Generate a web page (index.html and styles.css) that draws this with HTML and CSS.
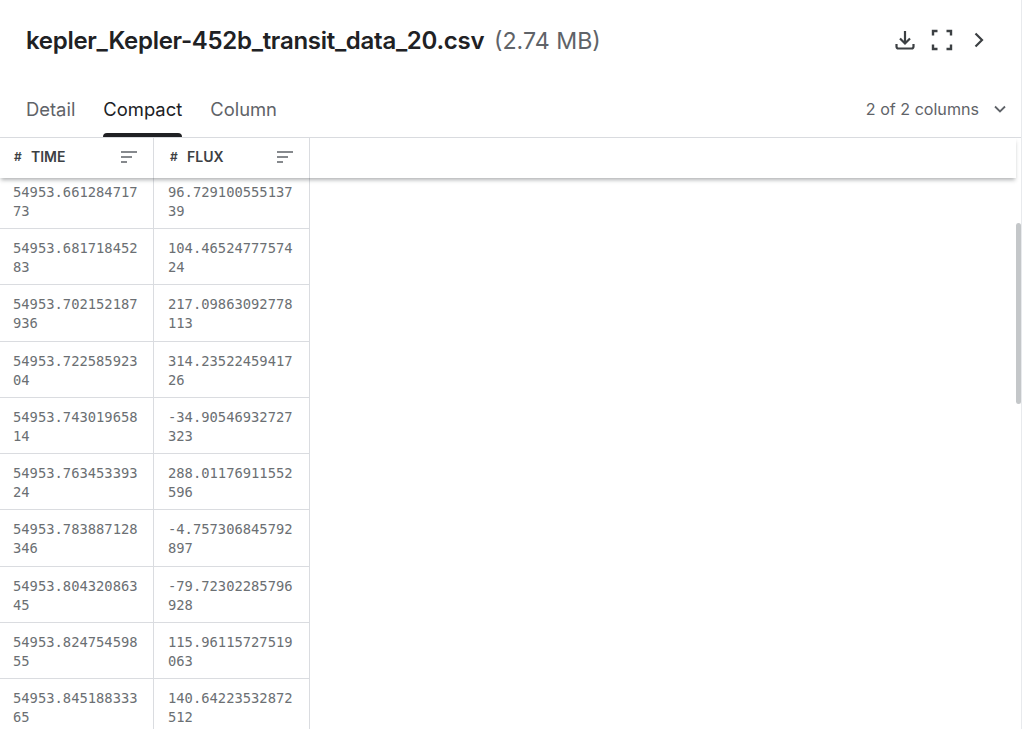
FILE: index.html
```html
<!DOCTYPE html>
<html lang="en">
<head>
    <meta charset="UTF-8">
    <meta name="viewport" content="width=device-width, initial-scale=1.0">
    <title>kepler_Kepler-452b_transit_data_20.csv</title>
    <link rel="stylesheet" href="styles.css">
</head>
<body>

    <div class="panel">
        <header class="file-header">
            <h1 class="file-title">kepler_Kepler-452b_transit_data_20.csv <span class="file-size">(2.74 MB)</span></h1>
            <div class="file-actions">
                <svg class="icon" width="24" height="24" viewBox="0 0 24 24" fill="none" stroke="#3c4043" stroke-width="2.2">
                    <path d="M12 3v12M7 10.5l5 5 5-5"/>
                    <path d="M3.5 16v2.5a2 2 0 0 0 2 2h13a2 2 0 0 0 2-2V16"/>
                </svg>
                <svg class="icon" width="24" height="24" viewBox="0 0 24 24" fill="none" stroke="#3c4043" stroke-width="2.4">
                    <path d="M3 7.5V3h4.5M16.5 3H21v4.5M3 16.5V21h4.5M21 16.5V21h-4.5"/>
                </svg>
                <svg class="icon" width="24" height="24" viewBox="0 0 24 24" fill="none" stroke="#3c4043" stroke-width="2.2">
                    <path d="M8.5 5.5l6.5 6.5-6.5 6.5"/>
                </svg>
            </div>
        </header>

        <nav class="tabs">
            <a class="tab">Detail</a>
            <a class="tab tab-active">Compact</a>
            <a class="tab">Column</a>
            <div class="column-picker">
                <span>2 of 2 columns</span>
                <svg width="16" height="16" viewBox="0 0 16 16" fill="none" stroke="#5f6368" stroke-width="1.8">
                    <path d="M3 5.5l5 5 5-5"/>
                </svg>
            </div>
        </nav>

        <div class="table-head">
            <div class="head-cell cell-time">
                <span class="head-hash">#</span><span class="head-name">TIME</span>
                <svg class="sort-icon" width="18" height="14" viewBox="0 0 18 14" fill="none" stroke="#5f6368" stroke-width="1.5">
                    <path d="M1 2h16M1 7h11M1 12h6"/>
                </svg>
            </div>
            <div class="head-cell cell-flux">
                <span class="head-hash">#</span><span class="head-name">FLUX</span>
                <svg class="sort-icon" width="18" height="14" viewBox="0 0 18 14" fill="none" stroke="#5f6368" stroke-width="1.5">
                    <path d="M1 2h16M1 7h11M1 12h6"/>
                </svg>
            </div>
        </div>

        <div class="table-body">
            <div class="row"><div class="cell cell-time">54953.66128471773</div><div class="cell cell-flux">96.72910055513739</div></div>
            <div class="row"><div class="cell cell-time">54953.68171845283</div><div class="cell cell-flux">104.4652477757424</div></div>
            <div class="row"><div class="cell cell-time">54953.702152187936</div><div class="cell cell-flux">217.09863092778113</div></div>
            <div class="row"><div class="cell cell-time">54953.72258592304</div><div class="cell cell-flux">314.2352245941726</div></div>
            <div class="row"><div class="cell cell-time">54953.74301965814</div><div class="cell cell-flux">-34.90546932727323</div></div>
            <div class="row"><div class="cell cell-time">54953.76345339324</div><div class="cell cell-flux">288.01176911552596</div></div>
            <div class="row"><div class="cell cell-time">54953.783887128346</div><div class="cell cell-flux">-4.757306845792897</div></div>
            <div class="row"><div class="cell cell-time">54953.80432086345</div><div class="cell cell-flux">-79.72302285796928</div></div>
            <div class="row"><div class="cell cell-time">54953.82475459855</div><div class="cell cell-flux">115.96115727519063</div></div>
            <div class="row"><div class="cell cell-time">54953.84518833365</div><div class="cell cell-flux">140.64223532872512</div></div>
            <div class="row"><div class="cell cell-time"></div><div class="cell cell-flux"></div></div>
        </div>

        <div class="scroll-thumb"></div>
    </div>

</body>
</html>
```

FILE: styles.css
```css
/* Page */
html, body {
    height: 100%;
}

body {
    margin: 0;
    overflow: hidden;
    background-color: #fff;
    font-family: Inter, "Noto Sans", sans-serif;
    color: #202124;
}

.panel {
    position: relative;
    width: 1021px;
    height: 729px;
    overflow: hidden;
    border-right: 1px solid #e8eaed;
    display: flex;
    flex-direction: column;
}

/* File title row */
.file-header {
    height: 80px;
    padding: 0 30px 0 26px;
    display: flex;
    align-items: center;
    justify-content: space-between;
    flex-shrink: 0;
}

.file-title {
    margin: 0;
    font-size: 24px;
    font-weight: 600;
    letter-spacing: -0.28px;
    white-space: nowrap;
}

.file-size {
    margin-left: 4px;
    font-weight: 400;
    font-size: 23.2px;
    letter-spacing: 0;
    color: #5f6368;
}

.file-actions {
    display: flex;
    align-items: center;
    gap: 13px;
}

/* Tabs */
.tabs {
    height: 58px;
    box-sizing: border-box;
    display: flex;
    align-items: flex-start;
    padding: 0 14px 0 26px;
    flex-shrink: 0;
    position: relative;
    border-bottom: 1px solid #dadce0;
}

.tab {
    position: relative;
    height: 57px;
    padding-top: 18px;
    box-sizing: border-box;
    margin-right: 28px;
    font-size: 18.4px;
    line-height: 22px;
    color: #5f6368;
}

.tab-active {
    color: #202124;
}

.tab-active::after {
    content: "";
    position: absolute;
    left: 0;
    right: 0;
    bottom: 0;
    height: 4px;
    background-color: #202124;
    border-radius: 4px 4px 0 0;
}

.column-picker {
    margin-left: auto;
    padding-top: 18px;
    display: flex;
    align-items: center;
    gap: 13px;
    font-size: 16.1px;
    line-height: 22px;
    color: #5f6368;
}

.column-picker svg {
    margin-right: -1px;
}

/* Table */
.table-head {
    height: 40px;
    box-sizing: border-box;
    display: flex;
    flex-shrink: 0;
    position: relative;
    width: 1016px;
    background-color: #fff;
    box-shadow: 0 3px 4px -1px rgba(60, 64, 67, 0.4);
    z-index: 1;
}

.head-cell {
    box-sizing: border-box;
    display: flex;
    align-items: center;
    padding: 0 15px 3px 14px;
    border-right: 1px solid #dadce0;
}

.head-cell.cell-flux {
    padding-left: 16px;
}

.head-hash {
    width: 17px;
    font-size: 12px;
    font-weight: 600;
    color: #3c4043;
}

.head-name {
    font-size: 14px;
    font-weight: 600;
    color: #3c4043;
}

.sort-icon {
    margin-left: auto;
}

.cell-time {
    width: 154px;
}

.cell-flux {
    width: 156px;
}

/* the table scrolled a little, so the first row sits partly under the head */
.table-body {
    flex: 1;
    margin-top: -5.25px;
    overflow: hidden;
}

.row {
    display: flex;
    height: 56.25px;
    box-sizing: border-box;
    border-bottom: 1px solid #dadce0;
    width: 310px;
}

.cell {
    box-sizing: border-box;
    padding: 10px 14px 0 13px;
    border-right: 1px solid #dadce0;
    font-family: "DejaVu Sans Mono", "Liberation Mono", monospace;
    font-size: 13.8px;
    line-height: 19px;
    color: #6b6f73;
    overflow-wrap: anywhere;
}

.cell.cell-flux {
    padding-left: 14px;
}

.scroll-thumb {
    position: absolute;
    right: 0;
    top: 223px;
    width: 5px;
    height: 181px;
    border-radius: 3px;
    background-color: #c4c7c9;
}
```
